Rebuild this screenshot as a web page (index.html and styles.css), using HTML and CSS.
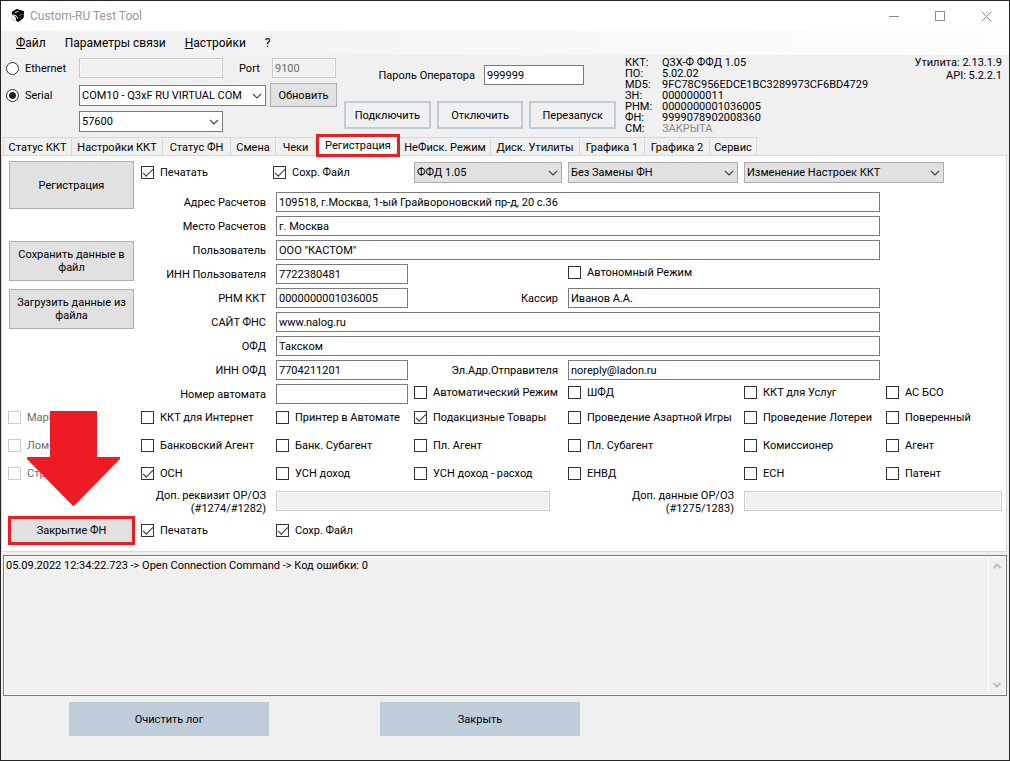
FILE: index.html
```html
<!DOCTYPE html>
<html lang="ru">
<head>
<meta charset="utf-8">
<title>Custom-RU Test Tool</title>
<link rel="stylesheet" href="styles.css">
</head>
<body>
<svg width="0" height="0" class="defs" aria-hidden="true">
  <symbol id="chevron" viewBox="0 0 10 6"><path d="M1 1l4 4 4-4" fill="none" stroke="currentColor" stroke-width="1.1"/></symbol>
</svg>
<div class="window">
  <header class="titlebar">
    <svg class="app-icon" viewBox="0 0 16 16" aria-hidden="true">
      <path d="M1 8.500l4 1 1.500 4-3 .500-3-2z" fill="#e4e4e4"/>
      <path d="M2 3.500L7 .500l4 1 4 1.500-.5 7L9 14.500 6.500 13 6 9 2 6.500z" fill="#000"/>
      <path d="M3 6.500l4 1.500 1 3M5 4.500l4-1.500" fill="none" stroke="#fff"/>
      <path d="M9.500 7.500l4-2" stroke="#777"/>
      <path d="M9.500 10.500l3-1.500" stroke="#444"/>
    </svg>
    <h1 class="title">Custom-RU Test Tool</h1>
    <div class="win-controls">
      <button type="button" class="win-btn" aria-label="Свернуть"><svg width="11" height="11"><path d="M0 5.500h10" stroke="#8c8c8c"/></svg></button>
      <button type="button" class="win-btn" aria-label="Развернуть"><svg width="11" height="11"><rect x=".5" y=".5" width="9" height="9" fill="none" stroke="#8c8c8c"/></svg></button>
      <button type="button" class="win-btn" aria-label="Закрыть окно"><svg width="11" height="11"><path d="M.5.500l10 10M10.500.500l-10 10" stroke="#8c8c8c"/></svg></button>
    </div>
  </header>

  <nav class="menu">
    <a href="#file"><u>Ф</u>айл</a>
    <a href="#link">Параметры связи</a>
    <a href="#settings"><u>Н</u>астройки</a>
    <a href="#help">?</a>
  </nav>

  <section class="top">
    <div class="connection">
      <div class="conn-row">
        <label class="radio"><input type="radio" name="link">Ethernet</label>
        <input class="field conn-main" type="text" aria-label="Адрес Ethernet" disabled>
        <label class="port-label" for="port">Port</label>
        <input class="field port" id="port" type="text" value="9100" disabled>
      </div>
      <div class="conn-row">
        <label class="radio"><input type="radio" name="link" checked>Serial</label>
        <span class="select conn-wide"><select aria-label="COM-порт"><option>COM10 - Q3xF RU VIRTUAL COM</option></select><svg><use href="#chevron"/></svg></span>
        <button type="button" class="btn refresh">Обновить</button>
      </div>
      <div class="conn-row">
        <span class="radio"></span>
        <span class="select conn-main"><select aria-label="Скорость"><option>57600</option></select><svg><use href="#chevron"/></svg></span>
      </div>
    </div>
    <div class="operator">
      <div class="password"><label for="pass">Пароль Оператора</label><input class="field" id="pass" type="text" value="999999"></div>
      <div class="actions">
        <button type="button" class="outline-btn">Подключить</button>
        <button type="button" class="outline-btn">Отключить</button>
        <button type="button" class="outline-btn">Перезапуск</button>
      </div>
    </div>
    <dl class="info">
      <dt>ККТ:</dt><dd>Q3X-Ф ФФД 1.05</dd>
      <dt>ПО:</dt><dd>5.02.02</dd>
      <dt>MD5:</dt><dd>9FC78C956EDCE1BC3289973CF6BD4729</dd>
      <dt>ЗН:</dt><dd>0000000011</dd>
      <dt>РНМ:</dt><dd>0000000001036005</dd>
      <dt>ФН:</dt><dd>9999078902008360</dd>
      <dt>СМ:</dt><dd class="muted">ЗАКРЫТА</dd>
    </dl>
    <div class="version">Утилита: 2.13.1.9<br>API: 5.2.2.1</div>
  </section>

  <div class="tabs" role="tablist">
    <button type="button" role="tab" class="tab">Статус ККТ</button>
    <button type="button" role="tab" class="tab">Настройки ККТ</button>
    <button type="button" role="tab" class="tab">Статус ФН</button>
    <button type="button" role="tab" class="tab">Смена</button>
    <button type="button" role="tab" class="tab">Чеки</button>
    <button type="button" role="tab" class="tab active" aria-selected="true">Регистрация</button>
    <button type="button" role="tab" class="tab">НеФиск. Режим</button>
    <button type="button" role="tab" class="tab">Диск. Утилиты</button>
    <button type="button" role="tab" class="tab">Графика 1</button>
    <button type="button" role="tab" class="tab">Графика 2</button>
    <button type="button" role="tab" class="tab">Сервис</button>
  </div>

  <main class="panel">
    <aside class="side">
      <button type="button" class="btn side-main">Регистрация</button>
      <button type="button" class="btn">Сохранить данные в файл</button>
      <button type="button" class="btn">Загрузить данные из файла</button>
    </aside>

    <div class="print-opts">
      <label class="check"><input type="checkbox" checked>Печатать</label>
      <label class="check"><input type="checkbox" checked>Сохр. Файл</label>
    </div>
    <span class="select grey c4"><select aria-label="Версия ФФД"><option>ФФД 1.05</option></select><svg><use href="#chevron"/></svg></span>
    <span class="select grey c5"><select aria-label="Замена ФН"><option>Без Замены ФН</option></select><svg><use href="#chevron"/></svg></span>
    <span class="select grey c6-end mode"><select aria-label="Режим"><option>Изменение Настроек ККТ</option></select><svg><use href="#chevron"/></svg></span>

    <label class="lbl c2" for="addr">Адрес Расчетов</label>
    <input class="field wide" id="addr" type="text" value="109518, г.Москва, 1-ый Грайвороновский пр-д, 20 с.36">
    <label class="lbl c2" for="place">Место Расчетов</label>
    <input class="field wide" id="place" type="text" value="г. Москва">
    <label class="lbl c2" for="user">Пользователь</label>
    <input class="field wide" id="user" type="text" value="ООО &quot;КАСТОМ&quot;">
    <label class="lbl c2" for="inn">ИНН Пользователя</label>
    <input class="field c3" id="inn" type="text" value="7722380481">
    <label class="check c5"><input type="checkbox">Автономный Режим</label>
    <label class="lbl c2" for="rnm">РНМ ККТ</label>
    <input class="field c3" id="rnm" type="text" value="0000000001036005">
    <label class="lbl c4" for="cashier">Кассир</label>
    <input class="field half" id="cashier" type="text" value="Иванов А.А.">
    <label class="lbl c2" for="site">САЙТ ФНС</label>
    <input class="field wide" id="site" type="text" value="www.nalog.ru">
    <label class="lbl c2" for="ofd">ОФД</label>
    <input class="field wide" id="ofd" type="text" value="Такском">
    <label class="lbl c2" for="innofd">ИНН ОФД</label>
    <input class="field c3" id="innofd" type="text" value="7704211201">
    <label class="lbl c4" for="mail">Эл.Адр.Отправителя</label>
    <input class="field half" id="mail" type="text" value="noreply@ladon.ru">
    <label class="lbl c2" for="auto">Номер автомата</label>
    <input class="field c3" id="auto" type="text">
    <label class="check c4"><input type="checkbox">Автоматический Режим</label>
    <label class="check c5"><input type="checkbox">ШФД</label>
    <label class="check c6"><input type="checkbox">ККТ для Услуг</label>
    <label class="check c7"><input type="checkbox">АС БСО</label>

    <label class="check mid c1 off"><input type="checkbox" disabled>Маркировка</label>
    <label class="check mid c2"><input type="checkbox">ККТ для Интернет</label>
    <label class="check mid c3"><input type="checkbox">Принтер в Автомате</label>
    <label class="check mid c4"><input type="checkbox" checked>Подакцизные Товары</label>
    <label class="check mid c5"><input type="checkbox">Проведение Азартной Игры</label>
    <label class="check mid c6"><input type="checkbox">Проведение Лотереи</label>
    <label class="check mid c7"><input type="checkbox">Поверенный</label>

    <label class="check mid c1 off"><input type="checkbox" disabled>Ломбард</label>
    <label class="check mid c2"><input type="checkbox">Банковский Агент</label>
    <label class="check mid c3"><input type="checkbox">Банк. Субагент</label>
    <label class="check mid c4"><input type="checkbox">Пл. Агент</label>
    <label class="check mid c5"><input type="checkbox">Пл. Субагент</label>
    <label class="check mid c6"><input type="checkbox">Комиссионер</label>
    <label class="check mid c7"><input type="checkbox">Агент</label>

    <label class="check mid c1 off"><input type="checkbox" disabled>Страхование</label>
    <label class="check mid c2"><input type="checkbox" checked>ОСН</label>
    <label class="check mid c3"><input type="checkbox">УСН доход</label>
    <label class="check mid c4"><input type="checkbox">УСН доход - расход</label>
    <label class="check mid c5"><input type="checkbox">ЕНВД</label>
    <label class="check mid c6"><input type="checkbox">ЕСН</label>
    <label class="check mid c7"><input type="checkbox">Патент</label>

    <label class="lbl two-line c2" for="req">Доп. реквизит ОР/ОЗ (#1274/#1282)</label>
    <input class="field extra span2" id="req" type="text" disabled>
    <label class="lbl two-line c5" for="data">Доп. данные ОР/ОЗ (#1275/1283)</label>
    <input class="field extra c6-end" id="data" type="text" disabled>

    <button type="button" class="btn close-fn c1">Закрытие ФН</button>
    <label class="check tall c2"><input type="checkbox" checked>Печатать</label>
    <label class="check tall c3"><input type="checkbox" checked>Сохр. Файл</label>

    <svg class="arrow" viewBox="0 0 94 95" aria-hidden="true"><path d="M23 0h47v46h23v2L47 95h-1L0 48v-2h23z" fill="#ed1c24"/></svg>
  </main>

  <section class="log">
    <textarea aria-label="Журнал" readonly>05.09.2022 12:34:22.723 -&gt; Open Connection Command -&gt; Код ошибки: 0</textarea>
    <div class="scroll" aria-hidden="true">
      <svg viewBox="0 0 8 6"><path d="M.5 5L4 1.500 7.500 5" fill="none" stroke="#bdbdbd" stroke-width="2"/></svg>
      <svg viewBox="0 0 8 6"><path d="M.5 1L4 4.500 7.500 1" fill="none" stroke="#bdbdbd" stroke-width="2"/></svg>
    </div>
  </section>

  <footer class="footer">
    <button type="button" class="fill-btn">Очистить лог</button>
    <button type="button" class="fill-btn">Закрыть</button>
  </footer>
</div>
</body>
</html>
```

FILE: styles.css
```css
* { box-sizing: border-box; }
body { margin: 0; background: #f0f0f0; font: 11px/13px Roboto, "Liberation Sans", sans-serif; color: #000; }
button, input, select, textarea { font: inherit; color: inherit; margin: 0; border-radius: 0; }
button { padding: 0; }
.defs { position: absolute; }

.window { min-height: 100vh; display: flex; flex-direction: column; border: 1px solid #252525; background: #f0f0f0; }

.titlebar { display: flex; align-items: center; height: 30px; padding-left: 9px; background: #fff; }
.app-icon { width: 15px; height: 16px; }
.title { flex: 1; margin: 0 0 0 5px; font: 12px/16px Roboto, "Liberation Sans", sans-serif; color: #999; }
.win-controls { display: flex; }
.win-btn { width: 46px; height: 28px; display: grid; place-items: center; border: 0; background: none; }

.menu { display: flex; gap: 19px; height: 24px; align-items: center; padding-left: 15px; background: linear-gradient(90deg, #f0f0f0, #fdfdfd); font: 12px/16px Roboto, "Liberation Sans", sans-serif; }
.menu a { color: #000; text-decoration: none; }

.top { display: flex; min-height: 82px; padding: 2px 7px 0 5px; }
.connection { width: 331px; display: flex; flex-direction: column; gap: 4px; padding-top: 1px; }
.conn-row { display: flex; align-items: center; }
.conn-row:first-child { margin-bottom: 1px; }
.radio { width: 73px; display: flex; align-items: center; gap: 6px; }
.radio input { appearance: none; width: 13px; height: 13px; border: 1px solid #333; border-radius: 50%; background: #fff; }
.radio input:checked { background: radial-gradient(circle, #222 0 3px, #fff 4px); }
.conn-main { width: 144px; }
.conn-wide { width: 187px; }
.port-label { width: 49px; padding-left: 16px; }
.port { width: 64px; }
.refresh { width: 67px; height: 24px; margin-left: 4px; }

.field { height: 20px; min-width: 0; padding: 0 2px; border: 1px solid #7a7a7a; background: #fff; }
.field:disabled { border-color: #ccc; background: #f0f0f0; box-shadow: inset 0 0 0 1px #f8f8f8; color: #6d6d6d; }

.select { position: relative; display: block; height: 21px; }
.select select { appearance: none; width: 100%; height: 100%; padding: 0 18px 0 2px; border: 1px solid #7a7a7a; background: #fff; }
.select svg { position: absolute; right: 4px; top: 8px; width: 10px; height: 6px; color: #444; pointer-events: none; }
.select.grey select { border-color: #adadad; background: #e1e1e1; }

.btn { border: 1px solid #adadad; background: #e1e1e1; }

.operator { width: 272px; margin-left: 7px; padding-top: 8px; }
.password { display: flex; align-items: center; justify-content: flex-end; gap: 9px; padding-right: 32px; }
.password .field { width: 100px; }
.actions { display: flex; gap: 6px; margin-top: 16px; }
.outline-btn { flex: 1; height: 28px; border: 2px solid #bfcddb; background: #f0f0f0; }

.info { display: grid; grid-template-columns: 37px auto; align-content: start; margin: 0 0 0 9px; line-height: 11px; }
.info dd { margin: 0; }
.info .muted { color: #888; }
.version { flex: 1; margin-top: -1px; text-align: right; white-space: nowrap; }

.tabs { display: grid; grid-template-columns: 69px 91px 68px 45px 40px 84px 91px 89px 65px 65px 47px; height: 18px; padding-left: 2px; white-space: nowrap; }
.tab { border: 1px solid #d9d9d9; border-width: 1px 1px 0 0; background: #f0f0f0; }
.tab:first-child { border-left-width: 1px; }
.tab.active { z-index: 1; height: 23px; margin-top: -3px; border: 3px solid #ed1c24; background: #fff; }

.panel { position: relative; display: grid; grid-template-columns: minmax(0, 127fr) minmax(0, 129fr) minmax(0, 132fr) minmax(0, 148fr) minmax(0, 170fr) minmax(0, 136fr) minmax(0, 116fr); grid-template-rows: 31px repeat(9, 24px) 28px 28px 25px 27px 29px; column-gap: 6px; align-items: start; margin-right: 2px; padding: 5px 4px 6px 6px; border: 1px solid #d9d9d9; background: #fff; }
.c1 { grid-column: 1; }
.c2 { grid-column: 2; }
.c3 { grid-column: 3; }
.c4 { grid-column: 4; }
.c5 { grid-column: 5; }
.c6 { grid-column: 6; }
.c7 { grid-column: 7; }
.c6-end { grid-column: 6 / 8; }
.span2 { grid-column: 3 / 5; }
.wide { grid-column: 3 / 7; }
.half { grid-column: 5 / 7; }

.side { grid-column: 1; grid-row: 1 / 10; display: flex; flex-direction: column; gap: 8px; padding: 0 1px; }
.side .btn { height: 40px; padding: 0 4px; }
.side .side-main { height: 48px; margin-bottom: 24px; }
.print-opts { grid-column: 2 / 4; display: grid; grid-template-columns: 132px 1fr; }
.print-opts .check { height: 23px; }
.panel .grey { margin-top: 1px; }
.mode { width: 200px; }

.lbl { height: 20px; padding-right: 4px; text-align: right; line-height: 21px; white-space: nowrap; }
.two-line { height: 26px; line-height: 13px; white-space: normal; }
.check { display: flex; align-items: center; gap: 6px; height: 17px; white-space: nowrap; }
.check input { appearance: none; flex: none; display: grid; place-items: center; width: 13px; height: 13px; border: 1px solid #333; background: #fff; }
.check input:checked::after { content: ""; width: 9px; height: 4px; margin-top: -3px; border: solid #333; border-width: 0 0 1px 1px; transform: rotate(-45deg); }
.check input:disabled { border-color: #ccc; }
.check.off { color: #6d6d6d; }
.check.mid { height: 19px; }
.check.tall { height: 29px; }
.extra { margin-top: 2px; }
.span2.extra { margin-right: 12px; }
.close-fn { height: 29px; border: 3px solid #ed1c24; }
.arrow { position: absolute; left: 25px; top: 255px; width: 94px; height: 95px; }

.log { flex: 1; display: flex; min-height: 141px; margin: 3px 2px 0; padding: 1px; border: 1px solid #7a7a7a; background: #fff; }
.log textarea { flex: 1; padding: 2px 1px; border: 0; resize: none; background: #f0f0f0; overflow: hidden; }
.scroll { width: 16px; margin-left: 1px; display: flex; flex-direction: column; justify-content: space-between; align-items: center; padding: 6px 0; background: #f0f0f0; }
.scroll svg { width: 8px; height: 6px; }

.footer { display: flex; gap: 111px; padding: 6px 68px 24px; }
.fill-btn { width: 200px; height: 34px; border: 0; background: #bfcddb; }
```
